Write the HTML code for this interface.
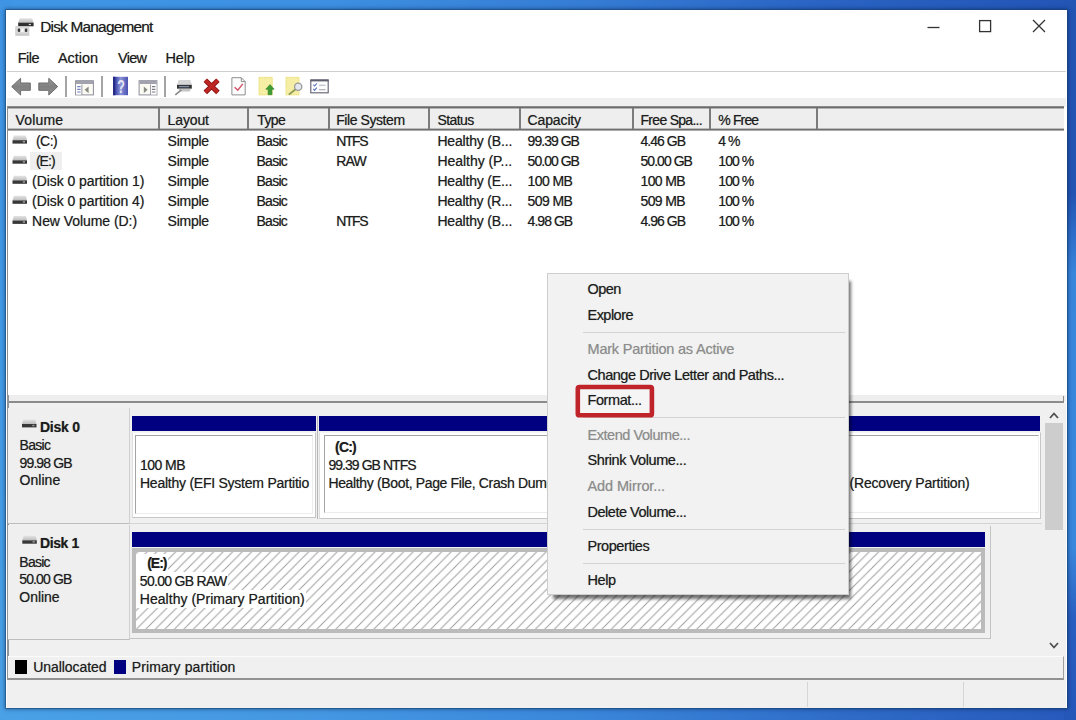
<!DOCTYPE html>
<html><head><meta charset="utf-8"><title>Disk Management</title>
<style>
html,body{margin:0;padding:0;}
body{width:1076px;height:720px;overflow:hidden;position:relative;font-family:"Liberation Sans",sans-serif;
 background:#3a86da;}
.a{position:absolute;}
.t{position:absolute;white-space:pre;line-height:18px;height:18px;text-shadow:0 0 .7px rgba(30,30,30,.5);}
#win{left:6px;top:10px;width:1061px;height:698px;background:#fff;box-shadow:0 0 0 1px rgba(25,70,110,.45),0 0 4px 1px rgba(0,25,70,.55);}
.hd{position:absolute;top:108px;width:2px;height:21px;background:#7c7c7c;}
.sep{position:absolute;height:1px;left:583px;width:262px;background:#d2d2d2;}
.tsep{position:absolute;top:76px;width:2px;height:21px;background:#a4a4a4;margin-left:-.5px}
</style></head><body>
<div class="a" style="left:0;top:0;width:1076px;height:360px;background:linear-gradient(90deg,#4097e6 0,#3d90e2 30%,#357cd4 55%,#2a64c4 76%,#2355b5 100%)"></div>
<div class="a" style="left:0;top:360px;width:1076px;height:360px;background:linear-gradient(90deg,#4aa1e6 0,#4497e2 30%,#3a86da 55%,#2f6cc8 78%,#2759bb 100%)"></div>
<div class="a" style="left:0;top:0;width:12px;height:720px;background:linear-gradient(180deg,#3f95e4 0,#439be6 50%,#4aa1e6 100%)"></div>
<div class="a" style="left:1064px;top:0;width:12px;height:720px;background:linear-gradient(180deg,#2355b5 0,#2355b5 27%,#3986dd 38%,#3a88de 76%,#2a5ec0 86%,#2557b9 100%)"></div>
<div id="win" class="a"></div>
<!-- menu bar line -->
<div class="a" style="left:7px;top:71px;width:1059px;height:1px;background:#cfcfcf"></div>
<!-- toolbar separators -->
<div class="tsep" style="left:65px"></div><div class="tsep" style="left:101px"></div><div class="tsep" style="left:164px"></div>
<!-- gray band under toolbar -->
<div class="a" style="left:7px;top:98px;width:1059px;height:9px;background:#efefef"></div>
<!-- list view -->
<div class="a" style="left:7.4px;top:106px;width:1056.6px;height:288.5px;background:#fff;border-left:1.5px solid #8e8e8e;box-sizing:border-box"></div>
<div class="a" style="left:8px;top:106px;width:1056px;height:25px;background:linear-gradient(to bottom,#8c8c8c 0,#8c8c8c 1px,#6a6a6a 1px,#6a6a6a 2px,#b4b4b4 2px,#b4b4b4 3px,#eeeeee 3px,#eeeeee 22px,#bcbcbc 22px,#bcbcbc 23px,#707070 23px,#707070 24px,#aaaaaa 24px,#aaaaaa 25px)"></div>
<div class="hd" style="left:158px"></div><div class="hd" style="left:247px"></div><div class="hd" style="left:328px"></div><div class="hd" style="left:428px"></div><div class="hd" style="left:519px"></div><div class="hd" style="left:632px"></div><div class="hd" style="left:709px"></div><div class="hd" style="left:816px"></div>
<!-- (E:) highlight -->
<div class="a" style="left:30px;top:152px;width:32px;height:18px;background:#efefef"></div>
<!-- splitter + lower pane -->
<div class="a" style="left:7px;top:394.5px;width:1059px;height:7px;background:#eeeeee"></div>
<div class="a" style="left:7px;top:401px;width:1057px;height:2px;background:#8c8c8c"></div>
<div class="a" style="left:7px;top:403px;width:1059px;height:305px;background:#f0f0f0"></div>
<div class="a" style="left:1062.5px;top:396px;width:1.5px;height:6px;background:#8c8c8c"></div>
<div class="a" style="left:6.5px;top:394.5px;width:2px;height:285px;background:#90959b"></div>
<!-- disk 0 row -->
<div class="a" style="left:8px;top:408px;width:121px;height:115px;background:#efefef;border-right:1px solid #d0d0d0;border-bottom:1px solid #bdbdbd"></div>
<div class="a" style="left:130px;top:523px;width:912px;height:1px;background:#d4d4d4"></div>
<div class="a" style="left:132px;top:416px;width:184px;height:15px;background:#000080"></div>
<div class="a" style="left:319px;top:416px;width:721px;height:15px;background:#000080"></div>
<div class="a" style="left:132px;top:432px;width:184px;height:86px;background:#fff;border:1px solid #c6c6c6;border-top-color:#f4f4f4;border-left-color:#dedede;box-sizing:border-box"></div>
<div class="a" style="left:135px;top:435px;width:178px;height:79px;border:1px solid #a4a4a4;border-right-color:#ececec;border-bottom-color:#ececec;box-sizing:border-box"></div>
<div class="a" style="left:317px;top:416px;width:1px;height:103px;background:#b5b5b5"></div>
<div class="a" style="left:319px;top:432px;width:722px;height:87px;background:#fff;border:1px solid #c6c6c6;border-top-color:#f4f4f4;border-left-color:#dedede;box-sizing:border-box"></div>
<div class="a" style="left:323.5px;top:435px;width:715px;height:78px;border:1px solid #a4a4a4;border-right-color:#f2f2f2;border-bottom-color:#ececec;box-sizing:border-box"></div>
<!-- disk 1 row -->
<div class="a" style="left:8px;top:525px;width:121px;height:114px;background:#efefef;border-right:1px solid #d0d0d0;border-bottom:1px solid #bdbdbd"></div>
<div class="a" style="left:132px;top:532px;width:853px;height:15px;background:#000080"></div>
<svg class="a" style="left:132px;top:548px" width="853" height="85"><defs><pattern id="hp" width="9.5" height="9.5" patternUnits="userSpaceOnUse"><path d="M-1 10.5 L10.5 -1 M-1 1 L1 -1 M8.5 10.5 L10.5 8.5" stroke="#9e9e9e" stroke-width="1" fill="none"/></pattern></defs><rect x="0" y="0" width="853" height="85" fill="#fff"/><rect x="0" y="0" width="853" height="85" fill="url(#hp)"/><rect x="2" y="2" width="849" height="81" fill="none" stroke="#bbbbbb" stroke-width="4"/></svg>
<div class="a" style="left:990px;top:526px;width:1px;height:113px;background:#c4c4c4"></div>
<div class="a" style="left:130px;top:638px;width:861px;height:1px;background:#c4c4c4"></div>
<!-- scrollbar -->
<div class="a" style="left:1045px;top:404px;width:18px;height:251px;background:#f0f0f0"></div>
<div class="a" style="left:1045px;top:423px;width:18px;height:107px;background:#cdcdcd"></div>
<svg class="a" style="left:1045px;top:404px" width="18" height="251"><path d="M5 14 L9 9.5 L13 14" fill="none" stroke="#505050" stroke-width="1.8"/><path d="M5 239 L9 243.5 L13 239" fill="none" stroke="#505050" stroke-width="1.8"/></svg>
<!-- legend -->
<div class="a" style="left:8px;top:656px;width:1056px;height:24px;border-top:1px solid #fbfbfb;border-bottom:2px solid #929292;border-right:1px solid #a0a0a0;box-sizing:border-box;background:#f0f0f0"></div>
<div class="a" style="left:7px;top:680px;width:1059px;height:2px;background:#f9f9f9"></div>
<div class="a" style="left:15px;top:660px;width:12px;height:14px;background:#000"></div>
<div class="a" style="left:114px;top:660px;width:12px;height:14px;background:#000080"></div>
<!-- status bar -->
<div class="a" style="left:7px;top:680px;width:1059px;height:28px;background:#f0f0f0"></div>
<div class="a" style="left:807px;top:682px;width:1px;height:25px;background:#d6d6d6"></div>
<div class="a" style="left:963px;top:682px;width:1px;height:25px;background:#d6d6d6"></div>
<svg class="a" style="left:0;top:0" width="1076" height="720" viewBox="0 0 1076 720">
<defs>
<linearGradient id="gtop" x1="0" y1="0" x2="0" y2="1"><stop offset="0" stop-color="#e4e4e4"/><stop offset="1" stop-color="#bdbdbd"/></linearGradient>
<linearGradient id="garr" x1="0" y1="0" x2="0" y2="1"><stop offset="0" stop-color="#9a9a9a"/><stop offset=".5" stop-color="#808080"/><stop offset="1" stop-color="#929292"/></linearGradient>
<linearGradient id="gbook" x1="0" y1="0" x2="1" y2="0"><stop offset="0" stop-color="#2a3090"/><stop offset=".18" stop-color="#444cae"/><stop offset=".5" stop-color="#8a92d6"/><stop offset="1" stop-color="#4a52b2"/></linearGradient>
<g id="drv">
 <path d="M1.4 0 H13.4 L14.5 4.6 H0 Z" fill="url(#gtop)"/>
 <rect x="0" y="4.6" width="14.5" height="3.4" fill="#383838"/>
 <rect x="10.3" y="5.4" width="2.2" height="1.5" fill="#9a9a9a"/>
</g>
</defs>
<!-- title icon -->
<path d="M19.7 18.3 H31.8 L33.6 22.6 H18.2 Z" fill="url(#gtop)"/>
<rect x="18.2" y="22.6" width="15.4" height="3.7" fill="#2e2e2e"/>
<rect x="28.8" y="23.9" width="2.1" height="1.2" fill="#d8d8d8"/>
<rect x="15.3" y="26.3" width="14" height="9.5" fill="#c9c9c9"/>
<rect x="16.2" y="27.2" width="12.2" height="6.4" fill="#d9d9d9"/>
<rect x="20.5" y="28.5" width="3.3" height="3.6" fill="#f4f4f4"/>
<rect x="17.8" y="28.4" width="2.4" height="3.7" rx="1" fill="#3c3c3c"/>
<rect x="24.9" y="28.4" width="2.4" height="3.7" rx="1" fill="#3c3c3c"/>
<!-- window buttons -->
<path d="M927.5 27.5 H939.5" stroke="#333" stroke-width="1.3"/>
<rect x="979.6" y="20.6" width="11" height="11" fill="none" stroke="#333" stroke-width="1.3"/>
<path d="M1033 20 L1045 32 M1045 20 L1033 32" stroke="#333" stroke-width="1.3"/>
<!-- back / forward -->
<path d="M11.7 86.6 L20.6 78.3 V83 H30.3 V90.3 H20.6 V95 Z" fill="url(#garr)" stroke="#6c6c6c" stroke-width="1" stroke-linejoin="round"/>
<path d="M57.7 86.6 L48.8 78.3 V83 H38.8 V90.3 H48.8 V95 Z" fill="url(#garr)" stroke="#6c6c6c" stroke-width="1" stroke-linejoin="round"/>
<!-- show/hide console tree -->
<g>
<rect x="75.6" y="80.7" width="17.8" height="14.2" fill="#fbfbf4" stroke="#8d8d9b" stroke-width="1"/>
<rect x="76" y="81" width="17" height="3" fill="#a3a3b0"/>
<rect x="76.1" y="84.6" width="5.6" height="9.9" fill="#fff"/>
<path d="M81.9 84.5 V95" stroke="#9a9aa6" stroke-width="1"/>
<path d="M77.2 86.6 H80.6 M77.2 89.3 H80.6 M77.2 92 H80.6" stroke="#6f7fc0" stroke-width="1.2"/>
<path d="M84.6 89.8 L88.6 86.4 V93.2 Z" fill="#8b8b86"/>
</g>
<!-- help book -->
<rect x="113" y="76.8" width="15" height="18.4" fill="url(#gbook)"/>
<rect x="113" y="76.8" width="2.2" height="18.4" fill="#262c86"/>
<text x="121.2" y="93" font-family="Liberation Sans, sans-serif" font-weight="bold" font-size="19" fill="#e4e6f6" text-anchor="middle" transform="translate(121.2 0) scale(.66 1) translate(-121.2 0)">?</text>
<!-- console tree right -->
<g>
<rect x="139.1" y="80.7" width="17.8" height="14.2" fill="#fbfbf4" stroke="#8d8d9b" stroke-width="1"/>
<rect x="139.5" y="81" width="17" height="3" fill="#a3a3b0"/>
<rect x="150.8" y="84.6" width="5.7" height="9.9" fill="#fff"/>
<path d="M150.6 84.5 V95" stroke="#9a9aa6" stroke-width="1"/>
<path d="M152 86.6 H155.4 M152 89.3 H155.4 M152 92 H155.4" stroke="#7a7a86" stroke-width="1.2"/>
<path d="M147.6 89.8 L143.8 86.4 V93.2 Z" fill="#8b8b86"/>
</g>
<!-- drive w/ connector -->
<path d="M178.6 80.1 H190.4 L191.8 84.8 H177 Z" fill="#d6d6d6"/>
<rect x="177" y="84.8" width="14.8" height="3.9" fill="#343434"/>
<path d="M179 86.7 H189" stroke="#8fa6c4" stroke-width="1"/>
<path d="M178 88.7 H191 L189.6 91.6 H180.4 Z" fill="#c4c4c4"/>
<path d="M175.3 94.8 L181.4 89.8" stroke="#8a8a8a" stroke-width="1.6"/>
<!-- red X -->
<path d="M205.3 80.2 L217.9 92.4 M217.9 80.2 L205.3 92.4" stroke="#8d1717" stroke-width="5" stroke-linecap="butt"/>
<path d="M205.3 80.2 L217.9 92.4 M217.9 80.2 L205.3 92.4" stroke="#bd2622" stroke-width="3.2" stroke-linecap="butt"/>
<!-- doc with check -->
<path d="M231.9 77.7 H241.3 L245.2 81.6 V94.9 H231.9 Z" fill="#fdfdfd" stroke="#8e8e8e" stroke-width="1"/>
<path d="M241.3 77.7 V81.6 H245.2" fill="none" stroke="#8e8e8e" stroke-width="1"/>
<path d="M234.6 87.2 L237.8 90.2 L242.8 83.9" fill="none" stroke="#d4556a" stroke-width="1.5"/>
<!-- yellow doc + green arrow -->
<rect x="258.5" y="76.8" width="14.3" height="18.6" fill="#f6eea4"/>
<rect x="259.3" y="77.6" width="12.7" height="17" fill="none" stroke="#e6da7c" stroke-width=".8" stroke-dasharray="1.2 1.2"/>
<path d="M270 84.6 L274.2 89.2 H271.9 V94.7 H268.1 V89.2 H265.8 Z" fill="#3f9c34" stroke="#2f7d28" stroke-width=".6"/>
<!-- yellow doc + magnifier -->
<rect x="285.5" y="76.8" width="14" height="18.6" fill="#f6eea4"/>
<rect x="286.3" y="77.6" width="12.4" height="17" fill="none" stroke="#e6da7c" stroke-width=".8" stroke-dasharray="1.2 1.2"/>
<path d="M288.8 94.6 L295.6 89.2" stroke="#8c9a58" stroke-width="1.8"/>
<circle cx="298.2" cy="86.8" r="3.6" fill="#e4e8ee" stroke="#9a9a9a" stroke-width="1.3"/>
<!-- checklist -->
<rect x="310.8" y="80.2" width="17.4" height="12.6" fill="#fdfdfd" stroke="#6c6c7c" stroke-width="1.2"/>
<rect x="310.4" y="79.4" width="18.2" height="2" fill="#5e5e6e"/>
<path d="M313.3 84.6 L314.6 86 L316.8 83.4 M313.3 88.9 L314.6 90.3 L316.8 87.7" fill="none" stroke="#5a78c0" stroke-width="1.1"/>
<path d="M319 85.3 H325.6 M319 89.6 H325.6" stroke="#b4b4be" stroke-width="1.1"/>
<!-- drive icons in list -->
<use href="#drv" x="12.5" y="135.6"/>
<use href="#drv" x="12.5" y="155.7"/>
<use href="#drv" x="12.5" y="175.8"/>
<use href="#drv" x="12.5" y="195.8"/>
<use href="#drv" x="12.5" y="215.9"/>
<!-- disk icons in lower pane -->
<use href="#drv" x="22" y="419.4"/>
<use href="#drv" x="22.3" y="535.7"/>
</svg>

<span class="t" style="top:17.66px;font-size:15.4px;letter-spacing:-0.776px;color:#1c1c1c;left:40.20px;">Disk Management</span>
<span class="t" style="top:48.98px;font-size:14.5px;letter-spacing:-0.544px;color:#1c1c1c;left:17.80px;">File</span>
<span class="t" style="top:48.98px;font-size:14.5px;letter-spacing:-0.052px;color:#1c1c1c;left:58.00px;">Action</span>
<span class="t" style="top:48.98px;font-size:14.5px;letter-spacing:-0.718px;color:#1c1c1c;left:118.00px;">View</span>
<span class="t" style="top:48.98px;font-size:14.5px;letter-spacing:-0.232px;color:#1c1c1c;left:165.60px;">Help</span>
<span class="t" style="top:111.15px;font-size:14px;letter-spacing:0.149px;color:#1c1c1c;left:15.60px;">Volume</span>
<span class="t" style="top:111.15px;font-size:14px;letter-spacing:-0.141px;color:#1c1c1c;left:167.60px;">Layout</span>
<span class="t" style="top:111.15px;font-size:14px;letter-spacing:-0.590px;color:#1c1c1c;left:257.20px;">Type</span>
<span class="t" style="top:111.15px;font-size:14px;letter-spacing:-0.420px;color:#1c1c1c;left:336.20px;">File System</span>
<span class="t" style="top:111.15px;font-size:14px;letter-spacing:-0.551px;color:#1c1c1c;left:437.40px;">Status</span>
<span class="t" style="top:111.15px;font-size:14px;letter-spacing:-0.134px;color:#1c1c1c;left:527.60px;">Capacity</span>
<span class="t" style="top:111.15px;font-size:14px;letter-spacing:-0.706px;color:#1c1c1c;left:640.50px;">Free Spa...</span>
<span class="t" style="top:111.15px;font-size:14px;letter-spacing:-0.854px;color:#1c1c1c;left:718.30px;">% Free</span>
<span class="t" style="top:132.15px;font-size:14px;letter-spacing:-0.507px;color:#1c1c1c;left:35.90px;">(C:)</span>
<span class="t" style="top:132.15px;font-size:14px;letter-spacing:-0.266px;color:#1c1c1c;left:167.60px;">Simple</span>
<span class="t" style="top:132.15px;font-size:14px;letter-spacing:-0.747px;color:#1c1c1c;left:256.50px;">Basic</span>
<span class="t" style="top:132.15px;font-size:14px;letter-spacing:-1.391px;color:#1c1c1c;left:336.20px;">NTFS</span>
<span class="t" style="top:132.15px;font-size:14px;letter-spacing:-0.172px;color:#1c1c1c;left:437.40px;">Healthy (B...</span>
<span class="t" style="top:132.15px;font-size:14px;letter-spacing:-0.970px;color:#1c1c1c;left:527.60px;">99.39 GB</span>
<span class="t" style="top:132.15px;font-size:14px;letter-spacing:-0.954px;color:#1c1c1c;left:640.50px;">4.46 GB</span>
<span class="t" style="top:132.15px;font-size:14px;letter-spacing:-0.942px;color:#1c1c1c;left:718.30px;">4 %</span>
<span class="t" style="top:152.15px;font-size:14px;letter-spacing:-0.941px;color:#1c1c1c;left:35.90px;">(E:)</span>
<span class="t" style="top:152.15px;font-size:14px;letter-spacing:-0.266px;color:#1c1c1c;left:167.60px;">Simple</span>
<span class="t" style="top:152.15px;font-size:14px;letter-spacing:-0.747px;color:#1c1c1c;left:256.50px;">Basic</span>
<span class="t" style="top:152.15px;font-size:14px;letter-spacing:-0.852px;color:#1c1c1c;left:336.20px;">RAW</span>
<span class="t" style="top:152.15px;font-size:14px;letter-spacing:-0.033px;color:#1c1c1c;left:437.40px;">Healthy (P...</span>
<span class="t" style="top:152.15px;font-size:14px;letter-spacing:-0.970px;color:#1c1c1c;left:527.60px;">50.00 GB</span>
<span class="t" style="top:152.15px;font-size:14px;letter-spacing:-0.957px;color:#1c1c1c;left:640.50px;">50.00 GB</span>
<span class="t" style="top:152.15px;font-size:14px;letter-spacing:-0.941px;color:#1c1c1c;left:718.30px;">100 %</span>
<span class="t" style="top:172.15px;font-size:14px;letter-spacing:-0.070px;color:#1c1c1c;left:32.10px;">(Disk 0 partition 1)</span>
<span class="t" style="top:172.15px;font-size:14px;letter-spacing:-0.266px;color:#1c1c1c;left:167.60px;">Simple</span>
<span class="t" style="top:172.15px;font-size:14px;letter-spacing:-0.747px;color:#1c1c1c;left:256.50px;">Basic</span>
<span class="t" style="top:172.15px;font-size:14px;letter-spacing:-0.172px;color:#1c1c1c;left:437.40px;">Healthy (E...</span>
<span class="t" style="top:172.15px;font-size:14px;letter-spacing:-0.608px;color:#1c1c1c;left:527.60px;">100 MB</span>
<span class="t" style="top:172.15px;font-size:14px;letter-spacing:-0.608px;color:#1c1c1c;left:640.50px;">100 MB</span>
<span class="t" style="top:172.15px;font-size:14px;letter-spacing:-0.941px;color:#1c1c1c;left:718.30px;">100 %</span>
<span class="t" style="top:192.15px;font-size:14px;letter-spacing:-0.070px;color:#1c1c1c;left:32.10px;">(Disk 0 partition 4)</span>
<span class="t" style="top:192.15px;font-size:14px;letter-spacing:-0.266px;color:#1c1c1c;left:167.60px;">Simple</span>
<span class="t" style="top:192.15px;font-size:14px;letter-spacing:-0.747px;color:#1c1c1c;left:256.50px;">Basic</span>
<span class="t" style="top:192.15px;font-size:14px;letter-spacing:-0.232px;color:#1c1c1c;left:437.40px;">Healthy (R...</span>
<span class="t" style="top:192.15px;font-size:14px;letter-spacing:-0.608px;color:#1c1c1c;left:527.60px;">509 MB</span>
<span class="t" style="top:192.15px;font-size:14px;letter-spacing:-0.608px;color:#1c1c1c;left:640.50px;">509 MB</span>
<span class="t" style="top:192.15px;font-size:14px;letter-spacing:-0.941px;color:#1c1c1c;left:718.30px;">100 %</span>
<span class="t" style="top:212.15px;font-size:14px;letter-spacing:-0.061px;color:#1c1c1c;left:32.10px;">New Volume (D:)</span>
<span class="t" style="top:212.15px;font-size:14px;letter-spacing:-0.266px;color:#1c1c1c;left:167.60px;">Simple</span>
<span class="t" style="top:212.15px;font-size:14px;letter-spacing:-0.747px;color:#1c1c1c;left:256.50px;">Basic</span>
<span class="t" style="top:212.15px;font-size:14px;letter-spacing:-1.391px;color:#1c1c1c;left:336.20px;">NTFS</span>
<span class="t" style="top:212.15px;font-size:14px;letter-spacing:-0.172px;color:#1c1c1c;left:437.40px;">Healthy (B...</span>
<span class="t" style="top:212.15px;font-size:14px;letter-spacing:-0.968px;color:#1c1c1c;left:527.60px;">4.98 GB</span>
<span class="t" style="top:212.15px;font-size:14px;letter-spacing:-0.968px;color:#1c1c1c;left:640.50px;">4.96 GB</span>
<span class="t" style="top:212.15px;font-size:14px;letter-spacing:-0.941px;color:#1c1c1c;left:718.30px;">100 %</span>
<span class="t" style="top:418.15px;font-size:14px;letter-spacing:-0.242px;color:#1c1c1c;left:40.00px;font-weight:bold;">Disk 0</span>
<span class="t" style="top:436.15px;font-size:14px;letter-spacing:-0.727px;color:#1c1c1c;left:19.60px;">Basic</span>
<span class="t" style="top:454.15px;font-size:14px;letter-spacing:-0.895px;color:#1c1c1c;left:19.60px;">99.98 GB</span>
<span class="t" style="top:471.15px;font-size:14px;letter-spacing:0.022px;color:#1c1c1c;left:19.60px;">Online</span>
<span class="t" style="top:456.15px;font-size:14px;letter-spacing:-0.542px;color:#1c1c1c;left:140.00px;">100 MB</span>
<span class="t" style="top:474.15px;font-size:14px;letter-spacing:-0.244px;color:#1c1c1c;left:140.00px;">Healthy (EFI System Partitio</span>
<span class="t" style="top:438.15px;font-size:14px;letter-spacing:-0.777px;color:#1c1c1c;left:335.00px;font-weight:bold;">(C:)</span>
<span class="t" style="top:456.15px;font-size:14px;letter-spacing:-0.946px;color:#1c1c1c;left:328.40px;">99.39 GB NTFS</span>
<span class="t" style="top:474.15px;font-size:14px;letter-spacing:-0.349px;color:#1c1c1c;left:328.40px;">Healthy (Boot, Page File, Crash Dump, Basic Data Partition)</span>
<span class="t" style="top:474.15px;font-size:14px;letter-spacing:-0.185px;color:#1c1c1c;left:849.50px;">(Recovery Partition)</span>
<span class="t" style="top:534.15px;font-size:14px;letter-spacing:-0.408px;color:#1c1c1c;left:40.00px;font-weight:bold;">Disk 1</span>
<span class="t" style="top:553.15px;font-size:14px;letter-spacing:-0.727px;color:#1c1c1c;left:19.30px;">Basic</span>
<span class="t" style="top:570.15px;font-size:14px;letter-spacing:-0.882px;color:#1c1c1c;left:19.30px;">50.00 GB</span>
<span class="t" style="top:588.15px;font-size:14px;letter-spacing:-0.045px;color:#1c1c1c;left:19.30px;">Online</span>
<span class="t" style="top:554.15px;font-size:14px;letter-spacing:-1.007px;color:#1c1c1c;left:147.20px;font-weight:bold;background:#fff;padding-left:11.40px;margin-left:-11.40px;padding-right:1.5px;">(E:)</span>
<span class="t" style="top:572.15px;font-size:14px;letter-spacing:-0.699px;color:#1c1c1c;left:139.80px;background:#fff;padding-left:4.00px;margin-left:-4.00px;padding-right:1.5px;">50.00 GB RAW</span>
<span class="t" style="top:590.15px;font-size:14px;letter-spacing:0.031px;color:#1c1c1c;left:139.80px;background:#fff;padding-left:4.00px;margin-left:-4.00px;padding-right:1.5px;">Healthy (Primary Partition)</span>
<span class="t" style="top:658.15px;font-size:14px;letter-spacing:-0.067px;color:#1c1c1c;left:33.30px;">Unallocated</span>
<span class="t" style="top:658.15px;font-size:14px;letter-spacing:0.110px;color:#1c1c1c;left:131.70px;">Primary partition</span>
<!-- context menu -->
<div class="a" style="left:547px;top:273px;width:302px;height:322px;box-sizing:border-box;background:#f2f2f2;border:1px solid #cdcdcd;box-shadow:4px 6px 3px -2px rgba(0,0,0,.55)"></div>
<div class="sep" style="top:332px"></div><div class="sep" style="top:417px"></div><div class="sep" style="top:529px"></div><div class="sep" style="top:563px"></div>
<svg class="a" style="left:570px;top:380px" width="90" height="44" viewBox="570 380 90 44"><rect x="577.8" y="387" width="74.1" height="28.3" rx="1.6" fill="#f5f5f5" stroke="#c0242b" stroke-width="4.6"/></svg>
<span class="t" style="top:279.98px;font-size:14.5px;letter-spacing:-0.546px;color:#1c1c1c;left:587.50px;">Open</span>
<span class="t" style="top:305.98px;font-size:14.5px;letter-spacing:-0.525px;color:#1c1c1c;left:587.50px;">Explore</span>
<span class="t" style="top:339.98px;font-size:14.5px;letter-spacing:-0.200px;color:#8c8c8c;left:587.50px;text-shadow:0 0 .7px rgba(140,140,140,.5);">Mark Partition as Active</span>
<span class="t" style="top:365.98px;font-size:14.5px;letter-spacing:-0.453px;color:#1c1c1c;left:587.50px;">Change Drive Letter and Paths...</span>
<span class="t" style="top:390.98px;font-size:14.5px;letter-spacing:-0.424px;color:#1c1c1c;left:587.50px;">Format...</span>
<span class="t" style="top:425.98px;font-size:14.5px;letter-spacing:-0.445px;color:#8c8c8c;left:587.50px;text-shadow:0 0 .7px rgba(140,140,140,.5);">Extend Volume...</span>
<span class="t" style="top:450.98px;font-size:14.5px;letter-spacing:-0.424px;color:#1c1c1c;left:587.50px;">Shrink Volume...</span>
<span class="t" style="top:476.98px;font-size:14.5px;letter-spacing:-0.113px;color:#8c8c8c;left:587.50px;text-shadow:0 0 .7px rgba(140,140,140,.5);">Add Mirror...</span>
<span class="t" style="top:502.98px;font-size:14.5px;letter-spacing:-0.475px;color:#1c1c1c;left:587.50px;">Delete Volume...</span>
<span class="t" style="top:536.98px;font-size:14.5px;letter-spacing:-0.439px;color:#1c1c1c;left:587.50px;">Properties</span>
<span class="t" style="top:570.98px;font-size:14.5px;letter-spacing:-0.382px;color:#1c1c1c;left:587.50px;">Help</span>
</body></html>
